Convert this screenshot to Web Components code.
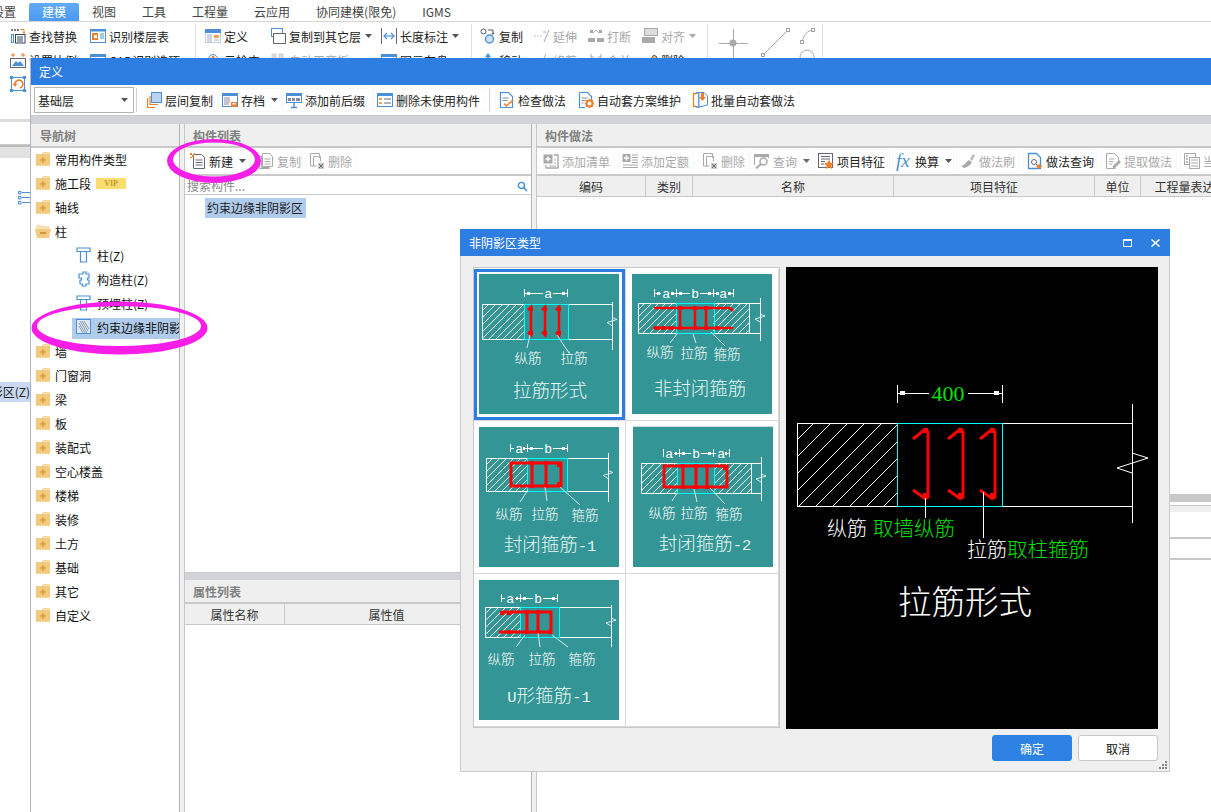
<!DOCTYPE html>
<html lang="zh-CN"><head><meta charset="utf-8"><title>定义</title>
<style>
html,body{margin:0;padding:0;background:#fff;}
body{width:1211px;height:812px;overflow:hidden;position:relative;font:12px "Noto Sans CJK SC","Microsoft YaHei",sans-serif;color:#222;}
</style></head><body>

<x-app></x-app>

<x-window style="left:30px;top:58px;right:0;bottom:0;" caption="定义">
  <x-toolbar style="height:30px;padding-left:3px;background:#fff;">
    <x-combo>基础层</x-combo>
    <x-sep style="margin:0 5px 0 2px;"></x-sep>
    <x-tool icon="floorcopy" style="width:76px;">层间复制</x-tool>
    <x-tool icon="archive" caret style="width:64px;">存档</x-tool>
    <x-tool icon="prefix" style="width:91px;">添加前后缀</x-tool>
    <x-tool icon="purge" style="width:112px;">删除未使用构件</x-tool>
    <x-sep style="margin:0 5px 0 4px;"></x-sep>
    <x-tool icon="check" style="width:77px;">检查做法</x-tool>
    <x-tool icon="autogear" style="width:112px;margin-left:2px;">自动套方案维护</x-tool>
    <x-tool icon="batch" style="width:112px;margin-left:2px;">批量自动套做法</x-tool>
  </x-toolbar>
  <x-strip style="height:9px;"></x-strip>
  <x-columns>
    <x-pane slot="nav" caption="导航树" style="flex:1;">
      <x-node icon="plus" style="margin-top:-1px;">常用构件类型</x-node>
      <x-node icon="plus">施工段<x-vip>VIP</x-vip></x-node>
      <x-node icon="plus">轴线</x-node>
      <x-node icon="minus">柱</x-node>
      <x-node icon="col" child>柱(Z)</x-node>
      <x-node icon="gz" child>构造柱(Z)</x-node>
      <x-node icon="col" child>预埋柱(Z)</x-node>
      <x-node icon="hatch" child selected>约束边缘非阴影区(Z)</x-node>
      <x-node icon="plus">墙</x-node>
      <x-node icon="plus">门窗洞</x-node>
      <x-node icon="plus">梁</x-node>
      <x-node icon="plus">板</x-node>
      <x-node icon="plus">装配式</x-node>
      <x-node icon="plus">空心楼盖</x-node>
      <x-node icon="plus">楼梯</x-node>
      <x-node icon="plus">装修</x-node>
      <x-node icon="plus">土方</x-node>
      <x-node icon="plus">基础</x-node>
      <x-node icon="plus">其它</x-node>
      <x-node icon="plus">自定义</x-node>
    </x-pane>
    <div slot="list" style="display:flex;flex-direction:column;height:100%;">
      <x-pane caption="构件列表" style="height:443px;">
        <x-toolbar style="height:26px;border-bottom:2px solid #c8c8c8;">
          <x-tool icon="newdoc" caret style="width:64px;margin-left:1px;">新建</x-tool>
          <x-tool icon="copydoc" off style="width:48px;margin-left:4px;">复制</x-tool>
          <x-tool icon="deldoc" off style="width:52px;margin-left:3px;">删除</x-tool>
        </x-toolbar>
        <x-search>搜索构件...</x-search>
        <x-listitem>约束边缘非阴影区</x-listitem>
      </x-pane>
      <x-strip style="height:8px;margin-top:5px;"></x-strip>
      <x-pane caption="属性列表" style="flex:1;">
        <x-ghead cols="100,204">
          <span>属性名称</span><span>属性值</span>
        </x-ghead>
      </x-pane>
    </div>
    <div slot="right" style="display:flex;flex-direction:column;height:100%;">
      <x-pane caption="构件做法" style="height:370px;">
        <x-toolbar style="height:26px;border-bottom:2px solid #c8c8c8;">
          <x-tool icon="addlist" off style="width:76px;margin-left:2px;">添加清单</x-tool>
          <x-tool icon="addquota" off style="width:76px;margin-left:3px;">添加定额</x-tool>
          <x-tool icon="deldoc" off style="width:51px;margin-left:4px;">删除</x-tool>
          <x-tool icon="query" off caret style="width:62px;margin-left:1px;">查询</x-tool>
          <x-tool icon="feature" style="width:76px;margin-left:2px;">项目特征</x-tool>
          <x-tool icon="fx" caret style="width:62px;margin-left:2px;">换算</x-tool>
          <x-tool icon="brush" off style="width:63px;margin-left:2px;">做法刷</x-tool>
          <x-tool icon="lookup" style="width:74px;margin-left:4px;">做法查询</x-tool>
          <x-tool icon="extract" off style="width:76px;margin-left:4px;">提取做法</x-tool>
          <x-tool icon="current" off style="width:76px;margin-left:3px;">当前构件</x-tool>
        </x-toolbar>
        <x-ghead cols="109,47,201,201,46,100" style="height:20px;">
          <span>编码</span><span>类别</span><span>名称</span><span>项目特征</span><span>单位</span><span>工程量表达式</span>
        </x-ghead>
      </x-pane>
      <x-lower></x-lower>
    </div>
  </x-columns>
</x-window>

<x-marks></x-marks>

<x-window dialog style="left:460px;top:229px;width:710px;height:543px;" caption="非阴影区类型">
  <x-picker>
    <x-cell selected style="padding:5px 0 0 5px;"><x-diagram kind="0"></x-diagram></x-cell>
    <x-cell style="padding:5px 0 0 6px;"><x-diagram kind="1"></x-diagram></x-cell>
    <x-cell style="padding:6px 0 0 5px;"><x-diagram kind="2"></x-diagram></x-cell>
    <x-cell style="padding:6px 0 0 7px;"><x-diagram kind="3" style="box-shadow:0 -1px 0 #cfd6d6;"></x-diagram></x-cell>
    <x-cell style="padding:6px 0 0 5px;"><x-diagram kind="4"></x-diagram></x-cell>
    <x-cell></x-cell>
  </x-picker>
  <x-actions>
    <x-btn primary>确定</x-btn>
    <x-btn>取消</x-btn>
  </x-actions>
  <x-grip></x-grip>
</x-window>

<script>
const FONT='"Noto Sans CJK SC","Microsoft YaHei",sans-serif';
const B='#4a8fd8',O='#ee7f2a',G='#a9a9a9',D='#4a5560';
const s=(c,w=1)=>`fill="none" stroke="${c}" stroke-width="${w}"`;
const ICONS={
 find:`<path d="M1 1h2v2H1zM4 1h2v2H4zM7 1h2v2H7z" fill="#778"/><path d="M10.5 1.5h3.500v3" ${s(O)}/><path d="M12.500 4h3l-1.500 2z" fill="${O}"/><rect x="1.500" y="6.500" width="2" height="8" ${s(B)}/><rect x="5.500" y="6.500" width="9.500" height="8.500" fill="#fff" stroke="#345"/><path d="M7 9h6M7 11h6M7 13h6" ${s('#345')}/>`,
 floortab:`<rect x=".5" y="1.500" width="15" height="13" fill="#fff" stroke="${B}"/><rect x=".5" y="1.500" width="15" height="2" fill="${B}"/><rect x="2" y="5" width="6" height="7" fill="${O}"/><rect x="4" y="7" width="3" height="3" fill="#fff"/><path d="M10 6h4M10 8h4M10 10h4" ${s(B)}/>`,
 scale:`<path d="M1 3h4M3 1v4M11 3h4M13 1v4" ${s(O)}/><rect x=".5" y="6.500" width="15" height="9" fill="#fff" stroke="#667"/><path d="M2 14l4-5 2 2 2-2 4 5z" fill="${B}"/>`,
 rotate:`<rect x="1.500" y="1.500" width="13" height="13" ${s(B)}/><path d="M0 0h3v3H0zM13 0h3v3h-3zM0 13h3v3H0zM13 13h3v3h-3z" fill="${B}"/><path d="M5 9a4 4 0 1 1 5 3" ${s(O,1.600)}/><path d="M2.500 7.500h5L5 11z" fill="${O}"/>`,
 define:`<rect x=".5" y="1.500" width="15" height="13" fill="#fff" stroke="#b9cfe8"/><rect y="1" width="16" height="4" fill="${B}"/><path d="M2 7h5M2 9h5M2 11h5M2 13h5" ${s('#aab')}/><rect x="9" y="7" width="5" height="3" fill="#f0a050"/><path d="M9 12h5" ${s('#aab')}/>`,
 copyfloor:`<rect x="1" y="0" width="12" height="4" fill="${B}"/><rect x="1.500" y=".5" width="11" height="8" fill="#fff" stroke="${B}"/><rect x="3" y="5" width="13" height="4" fill="#666"/><rect x="3.500" y="5.500" width="12" height="10" fill="#fff" stroke="#666"/>`,
 length:`<path d="M.5 0v16M15.500 0v16" ${s('#667')}/><path d="M3 8h10" ${s(B,1.200)}/><path d="M6 5L3 8l3 3M10 5l3 3-3 3" ${s(B,1.200)}/>`,
 copy2:`<circle cx="3.500" cy="3.500" r="2.500" ${s('#556')}/><circle cx="9.500" cy="11" r="4" fill="#cfe2f5" stroke="${B}" stroke-width="1.400"/><path d="M8 2h5v4" ${s('#556')}/><path d="M11.500 5h3L13 7z" fill="#556"/>`,
 extend:`<path d="M0 8h1.500M3 8h1.500M6 8h1.500" ${s(G)}/><path d="M10 14L15 2" ${s(G)}/><path d="M9 4h3" ${s(G)}/>`,
 breakk:`<path d="M2 2h3v3H2zM11 2h3v3h-3zM0 10h7v4H0zM9 10h7v4H9z" fill="${G}"/><path d="M5 5l3-3M11 5L8 2" ${s(G)}/>`,
 align:`<rect x="2.500" y=".5" width="13" height="7" fill="#ddd" stroke="${G}"/><rect y="9" width="13" height="6" fill="${G}"/>`,
 cad:`<rect x=".5" y="2.500" width="15" height="13" fill="#fff" stroke="${B}"/><rect y="2" width="16" height="3" fill="${B}"/>`,
 cloud:`<circle cx="8" cy="7" r="4.500" fill="#fff" stroke="${B}"/><circle cx="8" cy="5" r="1.500" fill="${O}"/>`,
 level:`<path d="M2 2h4v14H2zM9 2h4v14H9z" fill="#ddd" stroke="#ccc"/>`,
 save:`<rect x=".5" y="2.500" width="15" height="13" fill="#fff" stroke="${B}"/><rect y="2" width="16" height="3" fill="${B}"/>`,
 move:`<path d="M8 1l3 4H9v4H7V5H5z" fill="${B}"/><path d="M1 9l2-2M15 9l-2-2" ${s(D)}/>`,
 trim:`<path d="M6 14L12 2" ${s(G)}/>`,
 merge:`<path d="M3 2v6M13 2v6M3 5h3M13 5h-3" ${s(G)}/>`,
 erase:`<path d="M3 14L12 3l3 2-8 10z" fill="#e5b760" stroke="#555"/>`,
 floorcopy:`<path d="M1.500 6v9.500H9M4 4v8.500h8" ${s(O,1.200)}/><rect x="5.500" y=".5" width="10" height="10" fill="#b8d2f0" stroke="${B}"/>`,
 archive:`<rect x=".5" y="1.500" width="15" height="13" fill="#fff" stroke="${B}"/><rect y="1" width="16" height="3" fill="${B}"/><path d="M2 6h6M2 8h6M2 10h6M2 12h5" ${s('#889')}/><rect x="9" y="10" width="6" height="5" fill="${O}"/><rect x="10.500" y="11" width="3" height="1.500" fill="#fff"/>`,
 prefix:`<rect x=".5" y="1.500" width="15" height="9" fill="#fff" stroke="${B}"/><rect y="1" width="16" height="3" fill="${B}"/><rect x="2" y="6" width="3" height="3" fill="#889"/><rect x="6" y="6" width="3" height="3" fill="#889"/><rect x="10" y="6" width="4" height="3" fill="#889"/><path d="M8 10v5M5 15.500h6" ${s(B,1.400)}/>`,
 purge:`<rect x=".5" y="1.500" width="15" height="13" fill="#fff" stroke="${B}"/><rect y="1" width="16" height="3" fill="${B}"/><path d="M2 6h3v2H2zM2 10h3v2H2z" fill="#f0a050"/><path d="M7 7h7M7 11h7" ${s('#667')}/>`,
 check:`<path d="M1.500 .5h8l4 4v11h-12z" fill="#fff" stroke="${B}" stroke-width="1.200"/><path d="M3.500 6h6M3.500 8.500h5" ${s('#889')}/><path d="M5 11.500l2.500 2.500L14 8" ${s(O,1.500)}/>`,
 autogear:`<path d="M1.500 .5h8l4 4v6M7 15.500H1.500V.5" fill="#fff" stroke="${B}" stroke-width="1.200"/><path d="M3.500 6h6M3.500 8.500h4M3.500 11h2" ${s('#889')}/><circle cx="11.500" cy="11.500" r="3" fill="none" stroke="${O}" stroke-width="2"/><path d="M11.500 6.800v2M11.500 14v2M6.800 11.500h2M14 11.500h2M8.300 8.300l1.500 1.500M13.200 13.200l1.500 1.500M8.300 14.700l1.500-1.500M13.200 9.800l1.500-1.500" ${s(O,1.300)}/>`,
 batch:`<path d="M4.500 1.500h-3v13h3" ${s(O,1.300)}/><path d="M4 1h3v14H4" ${s(B,1.300)}/><path d="M7 .5h5l3.500 3.500v9l-8.500 2z" fill="#fff" stroke="${B}"/><path d="M9 1h3v4h2l-3.500 4L7 5h2z" fill="${O}"/>`,
 newdoc:`<path d="M3.500 1.500h8l3 3v11h-11z" fill="#fff" stroke="#667"/><path d="M5.500 7h7M5.500 9.500h7M5.500 12h7" ${s('#667')}/><path d="M0 0h2v2H0zM2 2h2v2H2zM4 0h1v2H4zM0 4h2v1H0z" fill="${O}"/>`,
 copydoc:`<path d="M1.500 3.500h2v11h8v1h-10z" fill="#fff" stroke="${G}"/><path d="M4.500 .5h7l3 3v10h-10z" fill="#fff" stroke="${G}"/><path d="M6.500 6h6M6.500 8.500h6M6.500 11h6" ${s(G)}/>`,
 deldoc:`<path d="M1.500 .5h9v3h1v3" ${s(G)}/><path d="M1.500 .5v12.500h6" ${s(G)}/><path d="M4.500 3.500h5l2 2v3M4.500 3.500v10" ${s(G)}/><rect x="9" y="10" width="6" height="6" fill="#ccc"/><path d="M10 11l4 4M14 11l-4 4" ${s('#666')}/>`,
 addlist:`<rect x=".5" y="1.500" width="9" height="9" fill="${G}"/><path d="M5 3.500v5M2.500 6h5" ${s('#fff',1.500)}/><path d="M11 2h4v13H3v-3" ${s(G,1.400)}/><path d="M11 7h2M11 10h2M6 13h7" ${s(G)}/>`,
 addquota:`<rect x=".5" y="1" width="8" height="8" fill="${G}"/><path d="M4.500 2.500v5M2 5h5" ${s('#fff',1.500)}/><path d="M10 2h6M10 4.500h6M10 7h6M10 9.500h6M1 12h15M1 14.500h15" ${s(G)}/>`,
 query:`<path d="M.5 12V1.500h14V5" ${s(G)}/><rect y="1" width="15" height="3" fill="${G}"/><circle cx="9.500" cy="8.500" r="3.500" fill="#fff" stroke="${G}" stroke-width="1.500"/><path d="M7 11l-5 4.500" ${s(G,2)}/>`,
 feature:`<rect x=".5" y=".5" width="14" height="14" fill="#fff" stroke="#667"/><path d="M3 3.500h9M3 6h9M3 8.500h4M3 11h3" ${s('#667')}/><path d="M11 6.500l1.500 3.300 3.500.4-2.600 2.400.7 3.400-3.100-1.800-3.100 1.800.7-3.400L6 10.200l3.500-.4z" fill="${O}"/>`,
 fx:`<text x="0" y="13.500" font-family="Liberation Serif,serif" font-style="italic" font-size="19" fill="${B}">fx</text>`,
 brush:`<path d="M10 6l3-5 2 1.500L12 8z" fill="#bbb"/><path d="M1 13c3 0 5-4 8-6l3 2.500c-2 3-5 5-8 5.500z" fill="${G}"/>`,
 lookup:`<path d="M1.500 .5h8l4 4v11h-12z" fill="#fff" stroke="${B}" stroke-width="1.300"/><circle cx="7" cy="9" r="2.500" ${s('#667')}/><path d="M9 11l2 2" ${s('#667')}/><path d="M12 10l1 2.500 2.500.3-2 1.700.5 1.500-2-1-2 1 .5-1.500-2-1.700 2.500-.3z" fill="${O}"/>`,
 extract:`<path d="M1.500 .5h8l4 4v3M1.500 .5v15h9" ${s(G)}/><path d="M4 6h5M4 8.500h4M4 11h3" ${s(G)}/><path d="M8 13l6-6 2 2-6 6H8z" fill="${G}"/>`,
 current:`<rect x=".5" y=".5" width="11" height="11" fill="#fff" stroke="${G}"/><path d="M2 3h2M2 6h2M2 9h2" ${s(G,1.500)}/><rect x="5.500" y="4.500" width="10" height="11" fill="#fff" stroke="${G}"/><path d="M7 7h7M7 10h7M7 13h7" ${s(G)}/>`,
 search:`<circle cx="6.500" cy="6.500" r="3.800" ${s('#3f8fd8',1.800)}/><path d="M9.500 9.500L13.500 13.500" ${s('#3f8fd8',2)}/>`,
 plus:`<path d="M1 3h6l1-2h6.500v2H15v11.500H1z" fill="#f1c97f"/><path d="M8.500 1.500h6V3h-7z" fill="#f8e2b6"/><rect x="1" y="3.500" width="14" height="11" fill="#f1c97f"/><path d="M8 6v6M5 9h6" ${s('#d89b3a',1.600)}/>`,
 minus:`<path d="M1 3l1-1h4l1 1h7v3H1z" fill="#f7e0b0"/><path d="M0 6h16l-2 9H2z" fill="#f1c97f"/><path d="M5 10h6" ${s('#c78a2c',1.600)}/>`,
 col:`<path d="M1 1h13v3.500H1zM4.500 4.500V15h6V4.500" fill="#fff" stroke="${B}" stroke-width="1.200"/>`,
 gz:`<path d="M5 3h2V1h3v2h3v4h-1.500v2H13v4h-3v2H6.500v-2H4V9h1.500V7H3V3z" fill="#fff" stroke="${B}" stroke-width="1.200"/><path d="M10 .8c2 .2 3.500 1.500 4 3" ${s('#b9d2ee')}/>`,
 hatch:`<rect x=".5" y=".5" width="14" height="14" fill="#dfe8f4" stroke="${B}"/><path d="M4 2l7 12M6 2l6 10M8 2l5 8M3 4l6 10M3 7l4 7" ${s('#8a9cb0')}/>`
};
function def(name,css,html,init){
  customElements.define(name,class extends HTMLElement{
    constructor(){super();const r=this.attachShadow({mode:'open'});r.innerHTML=`<style>${css}</style>${typeof html==='function'?'':html}`;}
    connectedCallback(){if(typeof html==='function'&&!this._d){this._d=1;this.shadowRoot.innerHTML+=html(this);} if(init)init(this);}
  });
}
def('x-icon',':host{display:inline-block;width:16px;height:16px;flex:none;line-height:0}svg{display:block;overflow:visible}',
 h=>`<svg width="16" height="16" viewBox="0 0 16 16">${ICONS[h.getAttribute('name')]||''}</svg>`);
const caret=c=>`<svg width="7" height="4" viewBox="0 0 7 4" style="flex:none"><path d="M0 0h7L3.500 4z" fill="${c}"/></svg>`;
def('x-tool',`:host{display:inline-flex;flex:none;align-items:center;gap:3px;height:24px;padding-left:4px;box-sizing:border-box;border-radius:3px;box-shadow:inset 0 0 0 1px #f8f8f8;white-space:nowrap;overflow:hidden;color:#222;font:12px ${FONT}}
 :host([off]){color:#a8a8a8}.c{margin-left:3px;display:flex}`,
 h=>`<x-icon name="${h.getAttribute('icon')}"></x-icon><slot></slot>${h.hasAttribute('caret')?`<span class="c">${caret(h.hasAttribute('off')?'#666':'#555')}</span>`:''}`);
def('x-toolbar',':host{display:flex;align-items:center;flex:none;box-sizing:content-box}','<slot></slot>');
def('x-sep',':host{display:block;flex:none;width:1px;height:24px;background:#d4d4d4}','');
def('x-strip',':host{display:block;flex:none;background:#d2d3d8;border-top:1px solid #c9cad0;box-sizing:border-box}','');
def('x-combo',`:host{display:flex;flex:none;align-items:center;justify-content:space-between;box-sizing:border-box;width:100px;height:26px;border:1px solid #b5b5b5;padding:0 5px 0 3px;background:#fff;font:12px ${FONT};color:#222}`,
 `<slot></slot>${caret('#555')}`);
def('x-window',`:host{position:absolute;display:flex;flex-direction:column;box-sizing:border-box;background:#fff;border-left:1px solid #aeb6c6;font:12px ${FONT}}
 :host([dialog]){background:#efefef;border:1px solid #c3cbd8;border-top:0}
 .t{flex:none;height:27px;background:#2e7de1;color:#fff;display:flex;align-items:center;padding-left:8px;position:relative}
 :host([dialog]) .t{margin-left:-1px;margin-right:-1px;padding-left:9px}
 .c{display:flex;align-items:center;gap:19px;margin-left:auto;padding-right:10px}
 .b{flex:1;min-height:0;display:flex;flex-direction:column}`,
 h=>`<div class="t">${h.getAttribute('caption')}${h.hasAttribute('dialog')?`<span class="c"><svg width="9" height="8" viewBox="0 0 9 8"><path d="M.5.5h8v7h-8z" fill="none" stroke="#fff"/><path d="M0 0h9v2H0z" fill="#fff"/></svg><svg width="9" height="8" viewBox="0 0 9 8"><path d="M.5.5l8 7M8.500.5l-8 7" stroke="#fff" stroke-width="1.500" fill="none"/></svg></span>`:''}</div><div class="b"><slot></slot></div>`);
def('x-columns',`:host{flex:1;min-height:0;display:grid;grid-template-columns:148px 6px 346px 6px 1fr}
 .s{background:#f0f0f0;border-left:1px solid #b5b5b5;border-right:1px solid #c6c6c6;box-sizing:border-box}
 .w{min-width:0;overflow:hidden;display:flex;flex-direction:column;background:#fff}`,
 `<div class="w"><slot name="nav"></slot></div><div class="s"></div><div class="w"><slot name="list"></slot></div><div class="s"></div><div class="w"><slot name="right"></slot></div>`);
def('x-pane',`:host{display:flex;flex-direction:column;min-height:0;overflow:hidden;background:#fff;flex:none}
 .h{flex:none;height:22px;background:#efefef;border-bottom:2px solid #c8c8c8;color:#808080;font-weight:700;display:flex;align-items:center;padding-left:8px}
 :host([caption="导航树"]) .h{padding-left:9px}`,
 h=>`<div class="h">${h.getAttribute('caption')}</div><slot></slot>`);
def('x-node',`:host{display:flex;flex:none;align-items:center;height:24px;white-space:nowrap;color:#111;padding-left:4px;overflow:hidden}
 :host([child]){padding-left:41px}
 .r{display:flex;align-items:center;gap:5px;height:21px;box-sizing:border-box}
 :host([child]) .r{gap:6px;padding-left:4px;flex:1}
 :host([selected]) .r{background:#b0ccec;margin-top:3px;padding-bottom:3px}
 ::slotted(x-vip){margin-left:5px}`,
 h=>`<div class="r"><x-icon name="${h.getAttribute('icon')}" style="width:15px"></x-icon><span style="display:flex;align-items:center"><slot></slot></span></div>`);
def('x-vip',`:host{display:inline-block;width:30px;height:11px;line-height:11px;text-align:center;background:#fbdc6e;color:#bf9a35;font:700 8px/11px "Liberation Serif",serif}`,'<slot></slot>');
def('x-search',`:host{display:flex;flex:none;align-items:center;justify-content:space-between;height:18px;padding:0 4px 0 2px;border-bottom:1px solid #c8c8c8;color:#888;background:#fff}`,
 `<slot></slot><x-icon name="search" style="width:12px;height:12px;transform:scale(.8)"></x-icon>`);
def('x-listitem',`:host{display:block;flex:none;width:99px;height:20px;line-height:20px;margin:3px 0 0 20px;padding-left:2px;background:#b0ccec;color:#222;white-space:nowrap;overflow:hidden}`,'<slot></slot>');
def('x-ghead',`:host{display:grid;flex:none;height:20px;background:#efefef;border-bottom:1px solid #c8c8c8;color:#333;white-space:nowrap;overflow:hidden}
 ::slotted(span){display:flex;align-items:center;justify-content:center;border-right:1px solid #c8c8c8;overflow:hidden}`,'<slot></slot>',
 h=>{h.style.gridTemplateColumns=h.getAttribute('cols').split(',').map(x=>x+'px').join(' ');});
def('x-lower',`:host{display:flex;flex-direction:column;flex:1;background:#fff}
 .a{height:8px;background:#c8c8c8;flex:none}.b{height:3px;flex:none}
 .c{height:6px;background:#efefef;border-top:1px solid #c8c8c8;flex:none}
 .d{height:25px;border-bottom:2px solid #c8c8c8;flex:none}.e{height:19px;border-bottom:2px solid #c8c8c8;flex:none}`,
 `<div class="a"></div><div class="b"></div><div class="c"></div><div class="d"></div><div class="e"></div>`);
def('x-picker',`:host{display:grid;box-sizing:border-box;position:absolute;left:12px;top:38px;width:307px;height:461px;background:#fff;border:1px solid #c8c8c8;padding-top:1px;
 grid-template-columns:152px 153px;grid-template-rows:152px 153px 153px}`,'<slot></slot>');
def('x-cell',`:host{display:block;position:relative;box-sizing:border-box;border-right:1px solid #d8d8d8;border-bottom:1px solid #d8d8d8}
 .f{display:none;position:absolute;left:0;top:0;right:0;bottom:0;border:3px solid #2b7de0}
 :host([selected]) .f{display:block}`,`<slot></slot><div class="f"></div>`);
def('x-actions',`:host{position:absolute;left:531px;top:506px;display:flex;gap:6px}`,'<slot></slot>');
def('x-btn',`:host{display:flex;align-items:center;justify-content:center;box-sizing:border-box;width:80px;height:26px;background:#fff;border:1px solid #c8c8c8;border-radius:3px;color:#111;font:12px ${FONT}}
 :host([primary]){background:#2e82e3;border-color:#2e82e3;color:#fff}`,'<slot></slot>');
def('x-grip',`:host{position:absolute;right:2px;bottom:2px;width:8px;height:8px;display:block}svg{display:block}`,
 `<svg width="8" height="8" viewBox="0 0 8 8"><path d="M6 0h2v2H6zM3 3h2v2H3zM6 3h2v2H6zM0 6h2v2H0zM3 6h2v2H3zM6 6h2v2H6z" fill="#888"/></svg>`);

const CFG=[
 {dim:{y:19,t:[45,88],l:[[69,'a']]},rect:[3,30,133,65],hatch:[[3,45]],cy:[45,89],bx:133,by:[28,76],w:2.5,
  red:'M49 36l3-3v28l-3-3M63 36l3-3v28l-3-3M77 36l3-3v28l-3-3',dots:[[52,35],[52,59],[66,35],[66,59],[80,35],[80,59]],
  lead:[[51,61,48,74],[78,61,90,79]],lab:[[49,84,'纵筋'],[95,84,'拉筋']],title:[71,116,'拉筋形式']},
 {dim:{y:19,t:[22,44,81,101],l:[[34,'a'],[63,'b'],[91,'a']]},rect:[6,29,117,59],hatch:[[6,44],[81,117]],cy:[44,82],bx:128,by:[24,67],ext:117,w:2.5,
  red:'M22 34H98l3 3M21 54H101M48 34V54M63 34V54M74 34V54',dots:[[25,54],[31,54],[39,54],[48,34],[63,34],[74,34],[48,54],[74,54],[63,54],[85,54]],
  lead:[[45,60,38,69],[61,60,64,69],[79,58,93,72]],lab:[[28,78,'纵筋'],[62,79,'拉筋'],[95,80,'箍筋']],title:[68,114,'非封闭箍筋']},
 {dim:{y:21,t:[31,48,88],l:[[40,'a'],[69,'b']]},rect:[7,31,129,64],hatch:[[7,48]],cy:[48,88],bx:129,by:[26,75],w:3,
  red:'M32 36H82V59H32ZM53 36V59M67 36V59',dots:[[53,36],[67,36],[53,59],[67,59],[80,38],[80,57]],
  lead:[[49,63,41,75],[66,60,68,74],[81,60,101,78]],lab:[[30,87,'纵筋'],[66,87,'拉筋'],[106,88,'箍筋']],title:[71,117,'封闭箍筋-1']},
 {dim:{y:26,t:[30,46,80,96],l:[[36,'a'],[63,'b'],[88,'a']]},rect:[8,36,118,66],hatch:[[8,44],[81,118]],cy:[44,81],bx:128,by:[30,74],ext:118,w:3,
  red:'M31 39H94V60H31ZM50 39V60M63 39V60M74 39V60',dots:[[50,39],[63,39],[74,39],[50,60],[63,60],[74,60],[92,41]],
  lead:[[44,66,39,74],[61,62,64,75],[77,61,92,77]],lab:[[29,86,'纵筋'],[61,86,'拉筋'],[96,87,'箍筋']],title:[72,116,'封闭箍筋-2']},
 {dim:{y:18,t:[22,41,78],l:[[31,'a'],[59,'b']]},rect:[6,27,132,57],hatch:[[6,41]],cy:[41,80],bx:132,by:[25,67],w:3,
  red:'M23 32H72V52H20M48 32V52M59 32V52',dots:[[23,33],[30,33],[48,32],[59,32],[30,52],[48,52],[59,52],[71,52]],
  lead:[[46,55,37,67],[59,53,61,67],[73,55,89,67]],lab:[[22,79,'纵筋'],[63,79,'拉筋'],[103,79,'箍筋']],title:[70,115,'U形箍筋-1']}
];
function hatchLines(x0,y0,x1,y1,st,c='#fff'){
  let o='';
  for(let k=x0+y0+st;k<x1+y1;k+=st){
    const ax=Math.max(x0,k-y1),bx=Math.min(x1,k-y0);
    o+=`<line x1="${ax}" y1="${k-ax}" x2="${bx}" y2="${k-bx}" stroke="${c}" stroke-width="1" shape-rendering="crispEdges"/>`;
  }
  return o;
}
const mono=t=>t.replace(/[-0-9A-Za-z]+/g,m=>`<tspan font-family="Liberation Mono,monospace" font-size="15.500">${m}</tspan>`);
function drawDiagram(c){
  const W='#fff',C='#00ffff';
  let o='';
  const [x0,y0,x1,y1]=c.rect;
  c.hatch.forEach(h=>{o+=hatchLines(h[0],y0,h[1],y1,7);});
  const ext=c.ext||x1;
  o+=`<path d="M${x0}.5 ${y0}.5H${c.bx}M${x0}.5 ${y1}.5H${c.bx}M${x0}.5 ${y0}.5V${y1}.5" stroke="${W}" fill="none"/>`;
  if(c.ext)o+=`<path d="M${ext}.5 ${y0}V${y1}" stroke="${W}"/>`;
  o+=`<path d="M${c.bx}.5 ${c.by[0]}V${c.by[1]}" stroke="${W}"/>`;
  const m=(y0+y1)/2;
  o+=`<path d="M${c.bx} ${m-4}l5 2-10 3 5 3" stroke="${W}" fill="none" stroke-width=".8"/>`;
  o+=`<rect x="${c.cy[0]}.5" y="${y0}.5" width="${c.cy[1]-c.cy[0]}" height="${y1-y0}" fill="none" stroke="${C}"/>`;
  c.dim.t.forEach(t=>{o+=`<path d="M${t}.5 ${c.dim.y-4}V${c.dim.y+4}" stroke="${W}"/>`;});
  for(let i=0;i<c.dim.t.length-1;i++){
    const a=c.dim.t[i],b=c.dim.t[i+1],l=c.dim.l[i],narrow=b-a<20;
    o+=`<path d="M${a} ${c.dim.y}.5H${l[0]-5}M${l[0]+5} ${c.dim.y}.5H${b}" stroke="${W}"/>`;
    if(!narrow)o+=`<rect x="${a+3}" y="${c.dim.y-1}" width="3" height="3" fill="${W}"/>`;
    o+=`<rect x="${b-(narrow?4:5)}" y="${c.dim.y-1}" width="${narrow?2:3}" height="3" fill="${W}"/>`;
    o+=`<text x="${l[0]}" y="${c.dim.y+4.500}" font-family="Liberation Sans,sans-serif" font-size="13" text-anchor="middle" fill="${W}">${l[1]}</text>`;
  }
  o+=`<path d="${c.red}" fill="none" stroke="#f00" stroke-width="${c.w}" stroke-linejoin="miter"/>`;
  c.dots.forEach(d=>{o+=`<rect x="${d[0]-2}" y="${d[1]-2}" width="4" height="4" fill="#f00"/>`;});
  c.lead.forEach(l=>{o+=`<line x1="${l[0]}" y1="${l[1]}" x2="${l[2]}" y2="${l[3]}" stroke="${W}" stroke-width=".8"/>`;});
  c.lab.forEach(l=>{o+=`<text x="${l[0]}" y="${l[1]+5}" font-size="13.500" text-anchor="middle" fill="${W}">${l[2]}</text>`;});
  o+=`<text x="${c.title[0]}" y="${c.title[1]+6.500}" font-size="18.500" text-anchor="middle" fill="#e6f6f4">${mono(c.title[2])}</text>`;
  return o;
}
def('x-diagram',`:host{display:block;width:140px;height:140px;background:#339595}svg{display:block;font-family:${FONT};font-weight:300}`,
 h=>`<svg width="140" height="140" viewBox="0 0 140 140">${drawDiagram(CFG[+h.getAttribute('kind')])}</svg>`);
function hook(x){return `M${x-15} 439L${x-3} 429.500L${x} 432V497L${x-3} 498.500L${x-15} 490`;}
def('x-preview',`:host{position:absolute;left:325px;top:38px;display:block;width:372px;height:462px;background:#000}svg{display:block;font-family:${FONT};font-weight:300}`,
 ()=>`<svg width="372" height="462" viewBox="786 267 372 462">
  ${hatchLines(797,423,897,506,17)}
  <path d="M797.500 423.500H1132M797.500 506.500H1132M797.500 423V507" stroke="#fff" fill="none"/>
  <path d="M1132.500 404V523" stroke="#fff"/>
  <path d="M1132 453L1148 458L1117 468L1132 473" stroke="#fff" fill="none"/>
  <rect x="897.500" y="423.500" width="105" height="83" fill="none" stroke="#00ffff"/>
  <path d="M897.500 385V403M1002.500 385V403M897 393.500H929M968 393.500H1002" stroke="#fff"/>
  <path d="M900 391h5v4h-5zM994 391h5v4h-5z" fill="#fff"/>
  <text x="948" y="401" font-family="Liberation Serif,serif" font-size="22" text-anchor="middle" fill="#00e000">400</text>
  <path d="${hook(928)}${hook(963)}${hook(995)}" fill="none" stroke="#f00" stroke-width="3"/>
  <path d="M923 428h5v5h-5zM923 493h5v5h-5zM958 428h5v5h-5zM958 493h5v5h-5zM990 428h5v5h-5zM990 493h5v5h-5z" fill="#f00"/>
  <path d="M925.500 498V518M983.500 492V538" stroke="#fff"/>
  <text x="827" y="536" font-size="20" fill="#fff">纵筋</text>
  <text x="873" y="536" font-size="20.500" fill="#00e000">取墙纵筋</text>
  <text x="967" y="557" font-size="20" fill="#fff">拉筋</text>
  <text x="1007" y="557" font-size="20.500" fill="#00e000">取柱箍筋</text>
  <text x="898" y="614" font-size="33.500" fill="#fff">拉筋形式</text>
 </svg>`);
const ring=(cx,cy,rx,ry)=>`M${cx-rx} ${cy}a${rx} ${ry} 0 1 0 ${2*rx} 0a${rx} ${ry} 0 1 0 ${-2*rx} 0Z`;
def('x-marks',`:host{position:absolute;left:0;top:0;width:1211px;height:812px;pointer-events:none;display:block}svg{display:block}`,
 `<svg width="1211" height="812" viewBox="0 0 1211 812"><path fill-rule="evenodd" fill="#f81ee8" d="${ring(214,161,47,22)}${ring(214,159.500,41,17)}"/><path fill-rule="evenodd" fill="#f81ee8" d="${ring(119.500,328,88,26.500)}${ring(119,326,82,20)}"/></svg>`);
const item=(ic,t,off,car)=>`<div class="i${off?' off':''}"><x-icon name="${ic}"></x-icon>${t?`<span>${t}</span>`:''}${car?`<b>${caret(off?'#aaa':'#555')}</b>`:''}</div>`;
def('x-app',`:host{position:absolute;inset:0;display:block;font:12px ${FONT};color:#222;background:#fff;overflow:hidden}
 .m{display:flex;height:21px;border-bottom:1px solid #d6d6d6;color:#444;overflow:hidden;white-space:nowrap;margin-left:-8px}
 .m span{padding:0 13px;height:18px;margin-top:3px;line-height:18px;flex:none}
 .m span:first-child{padding-left:0}
 .m .a{background:linear-gradient(#62aaf6,#4b9af0);color:#fff;border-radius:2px 2px 0 0}
 .r{display:flex;height:95px;padding-top:2px;border-bottom:3px solid #dcdcdc}
 .g{flex:none;box-sizing:border-box;border-right:1px solid #dedede;display:grid;grid-auto-rows:24px;align-content:start}
 .i{display:flex;align-items:center;gap:3px;white-space:nowrap}.i.off{color:#a8a8a8}.i b{display:flex;margin-left:1px}
 .w{height:22px;border-bottom:1px solid #ccc;width:30px}
 .bar{height:11px;width:30px;background:#e2e2e2;border-top:2px solid #bbb}
 .l{width:30px;height:654px;position:relative;overflow:hidden}
 .sel{position:absolute;left:0;top:224px;width:30px;height:20px;padding-bottom:1px;box-sizing:border-box;background:#c8d9f1;display:flex;justify-content:flex-end;align-items:center;white-space:nowrap;overflow:hidden}
 .tree{position:absolute;left:18px;top:32px}`,
 `<div class="m"><span>设置</span><span class="a">建模</span><span>视图</span><span>工具</span><span>工程量</span><span>云应用</span><span>协同建模(限免)</span><span>IGMS</span></div>
 <div class="r">
  <div class="g" style="width:196px;padding-left:10px;grid-template-columns:80px 105px;">
   ${item('find','查找替换')}${item('floortab','识别楼层表')}${item('scale','设置比例')}${item('cad','CAD识别选项')}${item('rotate','')}
  </div>
  <div class="g" style="width:276px;padding-left:9px;grid-template-columns:65px 111px 90px;">
   ${item('define','定义')}${item('copyfloor','复制到其它层',0,1)}${item('length','长度标注',0,1)}${item('cloud','云检查')}${item('level','自动平齐板',1)}${item('save','图元存盘')}
  </div>
  <div class="g" style="width:236px;padding-left:8px;grid-template-columns:54px 54px 54px 65px;">
   ${item('copy2','复制')}${item('extend','延伸',1)}${item('breakk','打断',1)}${item('align','对齐',1,1)}${item('move','移动')}${item('trim','修剪',1)}${item('merge','合并',1)}${item('erase','删除')}
  </div>
  <div class="g" style="width:115px;">
   <svg width="114" height="95" viewBox="708 24 114 95"><circle cx="733" cy="43" r="3.500" fill="#aaa"/><path d="M719 43.500H748M733.500 29V60M763 55L788 30M802 42C804 34 807 31 813 30" stroke="#aaa" fill="none"/><path d="M761.500 53.500h3v3h-3zM786.500 28.500h3v3h-3zM800.500 40.500h3v3h-3zM811.500 28.500h3v3h-3z" fill="#fff" stroke="#999"/><circle cx="807" cy="57" r="7" fill="none" stroke="#aaa"/></svg>
  </div>
 </div>
 <div class="w"></div><div class="bar"></div>
 <div class="l">
  <svg class="tree" width="12" height="15" viewBox="0 0 12 15"><path d="M.5 1.500h2.500v2.500H.5zM.5 6.500h2.500v2.500H.5zM.5 11.500h2.500v2.500H.5z" fill="none" stroke="${B}"/><path d="M4 2.500h8M4 7.500h8M4 12.500h8" stroke="${B}"/></svg>
  <div class="sel">约束边缘非阴影区(Z)</div></div>`);
document.querySelector('x-window[dialog]').appendChild(document.createElement('x-preview'));
</script>
</body></html>
